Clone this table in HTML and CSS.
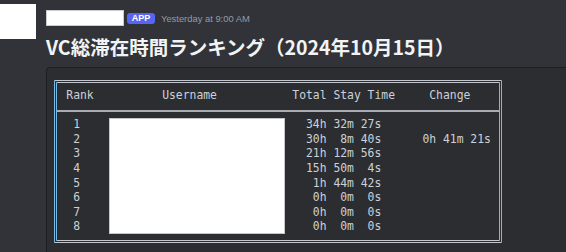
FILE: index.html
```html
<!DOCTYPE html>
<html lang="ja">
<head>
<meta charset="utf-8">
<title>VC総滞在時間ランキング</title>
<link rel="stylesheet" href="styles.css">
</head>
<body>
<div class="message">
  <div class="avatar"></div>
  <div class="content">
    <div class="meta">
      <span class="name-redacted"></span>
      <span class="badge">APP</span>
      <span class="time">Yesterday at 9:00 AM</span>
    </div>
    <h1 class="title">VC総滞在時間ランキング（2024年10月15日）</h1>
    <div class="codeblock">
      <div class="frame">
        <div class="thead">Rank          Username           Total Stay Time     Change</div>
        <div class="sep"></div>
        <div class="tbody">
          <div class="line"> 1                                 34h 32m 27s</div>
          <div class="line"> 2                                 30h  8m 40s      0h 41m 21s</div>
          <div class="line"> 3                                 21h 12m 56s</div>
          <div class="line"> 4                                 15h 50m  4s</div>
          <div class="line"> 5                                  1h 44m 42s</div>
          <div class="line"> 6                                  0h  0m  0s</div>
          <div class="line"> 7                                  0h  0m  0s</div>
          <div class="line"> 8                                  0h  0m  0s</div>
        </div>
        <div class="redact"></div>
      </div>
    </div>
  </div>
</div>
</body>
</html>
```
FILE: styles.css
```css
html, body {
  margin: 0;
  padding: 0;
  background: #313338;
  width: 566px;
  height: 252px;
  overflow: hidden;
}
.message {
  display: flex;
  gap: 10px;
  padding-top: 4px;
}
.avatar {
  width: 36px;
  height: 35px;
  background: #ffffff;
  flex: none;
}
.content {
  flex: 1;
  min-width: 0;
}
.meta {
  display: flex;
  align-items: center;
  height: 16px;
  margin-top: 6px;
  font-family: "Liberation Sans", Arial, sans-serif;
}
.name-redacted {
  width: 78px;
  height: 16px;
  box-sizing: border-box;
  background: #ffffff;
  border: 1px solid #c9cbcf;
}
.badge {
  margin-left: 3px;
  height: 11px;
  width: 28px;
  box-sizing: border-box;
  background: #5865f2;
  color: #ffffff;
  border-radius: 3px;
  font-size: 9px;
  font-weight: bold;
  line-height: 11px;
  text-align: center;
  margin-top: 1px;
}
.time {
  margin-left: 6px;
  font-size: 9.4px;
  color: #949ba4;
  margin-top: 1px;
}
.title {
  margin: 9px 0 0 0;
  font-family: "Noto Sans CJK JP", "Noto Sans", sans-serif;
  font-size: 19.5px;
  font-weight: bold;
  line-height: 24px;
  color: #f2f3f5;
  white-space: nowrap;
}
.codeblock {
  margin-top: 8px;
  width: 540px;
  height: 185px;
  box-sizing: border-box;
  background: #2b2d31;
  border: 1px solid #1e1f22;
  border-bottom: none;
  border-radius: 4px 4px 0 0;
  padding: 12px 0 0 7px;
}
.frame {
  position: relative;
  width: 448px;
  box-sizing: border-box;
  border-top: 3px double #c3c6cc;
  border-bottom: 3px double #c3c6cc;
  border-left: 3px double #78b9e4;
  border-right: 3px double #78b9e4;
  padding: 4.7px 0 6px 9.3px;
  font-family: "DejaVu Sans Mono", "Liberation Mono", monospace;
  font-size: 11.38px;
  line-height: 14.63px;
  color: #cdd1d7;
}
.thead {
  white-space: pre;
  padding-bottom: 7.4px;
}
.sep {
  height: 2px;
  background: #a9acb2;
  margin-left: -9.3px;
}
.tbody {
  margin-top: 5.3px;
}
.line {
  white-space: pre;
  height: 14.63px;
}
.redact {
  position: absolute;
  left: 52px;
  top: 35px;
  width: 176px;
  height: 116px;
  box-sizing: border-box;
  background: #ffffff;
  border: 1px solid #c4c6ca;
}
```
